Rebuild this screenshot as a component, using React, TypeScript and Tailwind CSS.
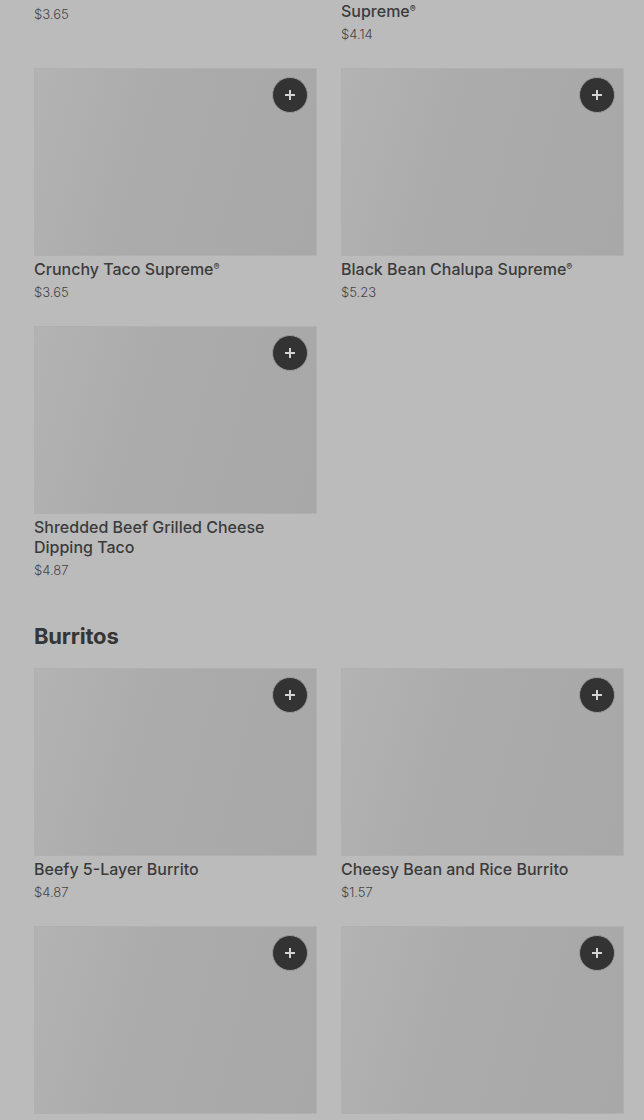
import React from 'react';

interface MenuItem {
  name: string;
  price: string;
}

const tacos: MenuItem[] = [
  { name: 'Soft Taco Supreme®', price: '$3.65' },
  { name: 'Nacho Cheese Doritos® Locos Tacos Supreme®', price: '$4.14' },
  { name: 'Crunchy Taco Supreme®', price: '$3.65' },
  { name: 'Black Bean Chalupa Supreme®', price: '$5.23' },
  { name: 'Shredded Beef Grilled Cheese Dipping Taco', price: '$4.87' },
];

const burritos: MenuItem[] = [
  { name: 'Beefy 5-Layer Burrito', price: '$4.87' },
  { name: 'Cheesy Bean and Rice Burrito', price: '$1.57' },
  { name: 'Bean Burrito', price: '$1.89' },
  { name: 'Burrito Supreme®', price: '$5.23' },
];

const renderName = (name: string) => {
  const parts = name.split('®');
  return parts.map((part, i) => (
    <React.Fragment key={i}>
      {part}
      {i < parts.length - 1 && <sup className="text-[9px] -top-[5px]">®</sup>}
    </React.Fragment>
  ));
};

const AddButton = () => (
  <button className="absolute top-[8px] right-[8px] w-9 h-9 rounded-full bg-[#333333] border border-[#9a9a9a] flex items-center justify-center">
    <svg width="12" height="12" viewBox="0 0 12 12" fill="none">
      <path d="M6 1v10M1 6h10" stroke="#d4d4d4" strokeWidth="2" />
    </svg>
  </button>
);

const ItemCard: React.FC<{ item: MenuItem }> = ({ item }) => (
  <div>
    <div className="relative h-[188px] border border-[#b0b0b0] bg-[linear-gradient(105deg,#b3b3b3_0%,#ababab_40%,#a8a8a8_100%)]">
      <AddButton />
    </div>
    <div className="mt-[3px] text-[16px] leading-5 font-medium text-[#3b3b3b]">
      {renderName(item.name)}
    </div>
    <div className="mt-1 text-[13px] leading-[18px] font-light text-[#444444]">{item.price}</div>
  </div>
);

const App: React.FC = () => {
  return (
    <div
      className="h-[1120px] overflow-hidden bg-[#bbbbbb] pl-[34px] pr-[20px]"
      style={{ fontFamily: 'Inter, "Noto Sans", sans-serif' }}
    >
      <div className="-mt-[210px] grid grid-cols-2 gap-x-6 gap-y-[25px]">
        {tacos.map((item) => (
          <ItemCard key={item.name} item={item} />
        ))}
      </div>

      <h2 className="mt-[43px] mb-[18px] text-[22px] leading-7 font-bold text-[#353535] tracking-[-0.2px]">
        Burritos
      </h2>

      <div className="grid grid-cols-2 gap-x-6 gap-y-[25px]">
        {burritos.map((item) => (
          <ItemCard key={item.name} item={item} />
        ))}
      </div>
    </div>
  );
};

export default App;
